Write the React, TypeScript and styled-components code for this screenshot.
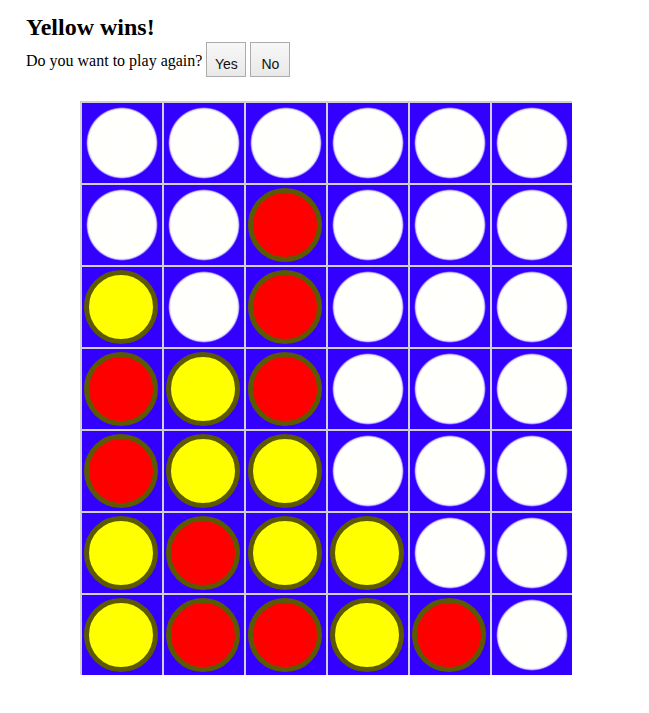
import React from "react";
import styled, { createGlobalStyle } from "styled-components";

const GlobalStyle = createGlobalStyle`
  html, body {
    margin: 0;
    padding: 0;
    background: #ffffff;
  }
  body {
    font-family: "Liberation Serif", "Times New Roman", serif;
    color: #000;
  }
`;

const Page = styled.div`
  padding: 14px 0 0 26px;
`;

const Title = styled.h2`
  margin: 0 0 1px 0;
  font-size: 24px;
  line-height: 27px;
  font-weight: bold;
`;

const PromptRow = styled.div`
  display: flex;
  align-items: flex-start;
  gap: 4px;
`;

const Prompt = styled.span`
  font-size: 16px;
  line-height: 18px;
  margin-top: 10px;
`;

const Button = styled.button`
  box-sizing: border-box;
  width: 40px;
  height: 35px;
  padding: 9px 0 0 0;
  margin: 0;
  font-family: "Liberation Sans", Arial, sans-serif;
  font-size: 14px;
  line-height: 16px;
  color: #111;
  text-align: center;
  vertical-align: top;
  background: linear-gradient(#f7f7f7, #e9e9e9);
  border: 1px solid #acacac;
  border-radius: 0;
`;

const Board = styled.div`
  display: grid;
  grid-template-columns: repeat(6, 82px);
  grid-auto-rows: 82px;
  width: max-content;
  margin: 24px 0 0 54px;
`;

const Cell = styled.div`
  box-sizing: border-box;
  border-left: 2px solid #d0d0d0;
  border-top: 2px solid #d0d0d0;
  background: #3300ff;
  display: flex;
  align-items: center;
  justify-content: center;
`;

const Hole = styled.div`
  width: 72px;
  height: 72px;
  border-radius: 50%;
  background: radial-gradient(circle, #ffffff 0, #fffffb 33px, #e4dcff 34.3px, #6a4dff 35.3px, #3300ff 36px);
`;

const Piece = styled.div<{ $color: string }>`
  box-sizing: border-box;
  width: 74px;
  height: 74px;
  margin-left: -2px;
  border-radius: 50%;
  background: ${(p) => p.$color};
  border: 5px solid #5c5a00;
`;

type Slot = "W" | "R" | "Y";

const rows: Slot[][] = [
  ["W", "W", "W", "W", "W", "W"],
  ["W", "W", "R", "W", "W", "W"],
  ["Y", "W", "R", "W", "W", "W"],
  ["R", "Y", "R", "W", "W", "W"],
  ["R", "Y", "Y", "W", "W", "W"],
  ["Y", "R", "Y", "Y", "W", "W"],
  ["Y", "R", "R", "Y", "R", "W"],
];

export default function App() {
  return (
    <>
      <GlobalStyle />
      <Page>
        <Title>Yellow wins!</Title>
        <PromptRow>
          <Prompt>Do you want to play again?</Prompt>
          <Button>Yes</Button>
          <Button>No</Button>
        </PromptRow>
        <Board>
          {rows.map((row, r) =>
            row.map((s, c) => (
              <Cell key={`${r}-${c}`}>
                {s === "W" ? (
                  <Hole />
                ) : (
                  <Piece $color={s === "R" ? "#ff0000" : "#ffff00"} />
                )}
              </Cell>
            ))
          )}
        </Board>
      </Page>
    </>
  );
}
